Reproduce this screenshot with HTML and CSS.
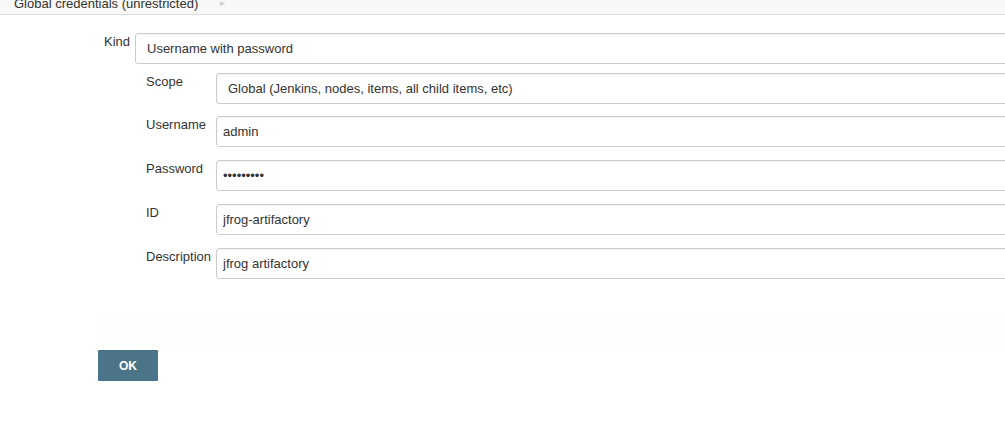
FILE: index.html
```html
<!DOCTYPE html>
<html>
<head>
<meta charset="utf-8">
<link rel="stylesheet" href="styles.css">
</head>
<body>
<div class="breadcrumbs">
  <span class="crumb">Global credentials (unrestricted)</span>
  <span class="arrow">&#9656;</span>
</div>
<form class="form">
  <div class="row kind-row">
    <label class="label kind-label">Kind</label>
    <div class="box select-box">Username with password</div>
  </div>
  <div class="nested">
    <div class="row">
      <label class="label">Scope</label>
      <div class="box select-box">Global (Jenkins, nodes, items, all child items, etc)</div>
    </div>
    <div class="row">
      <label class="label">Username</label>
      <input class="box input" type="text" value="admin">
    </div>
    <div class="row">
      <label class="label">Password</label>
      <input class="box input pw" type="password" value="123456789">
    </div>
    <div class="row">
      <label class="label">ID</label>
      <input class="box input" type="text" value="jfrog-artifactory">
    </div>
    <div class="row">
      <label class="label">Description</label>
      <input class="box input" type="text" value="jfrog artifactory">
    </div>
  </div>
  <div class="bottom-band"></div>
  <div class="actions">
    <button class="ok" type="button">OK</button>
  </div>
</form>
</body>
</html>
```
FILE: styles.css
```css
html, body {
  margin: 0;
  padding: 0;
  background: #ffffff;
  overflow: hidden;
  font-family: "Liberation Sans", Arial, sans-serif;
  color: #333333;
}

.breadcrumbs {
  height: 14px;
  background: #f8f8f6;
  border-bottom: 1px solid #dcdcdc;
  overflow: hidden;
  display: flex;
  align-items: flex-end;
  padding-left: 14px;
  font-size: 13px;
  line-height: 15px;
}

.crumb {
  color: #333333;
  position: relative;
  top: -3px;
  margin-top: -10px;
}

.arrow {
  color: #d0d0d0;
  font-size: 10px;
  margin-left: 22px;
  position: relative;
  top: -4px;
}

.form {
  padding-top: 18px;
  width: 1100px;
}

.row {
  display: flex;
  align-items: flex-start;
}

.kind-row {
  padding-left: 104px;
}

.label {
  font-size: 13px;
  line-height: 15px;
  padding-top: 1px;
  color: #333333;
  width: 70px;
  flex: none;
}

.kind-label {
  width: 31px;
}

.box {
  box-sizing: border-box;
  flex: 1;
  height: 31px;
  border: 1px solid #cccccc;
  border-radius: 3px;
  box-shadow: inset 0 1px 2px rgba(0, 0, 0, 0.06);
  background: #ffffff;
  font-family: "Liberation Sans", Arial, sans-serif;
  font-size: 13px;
  color: #333333;
  margin: 0;
}

.select-box {
  display: flex;
  align-items: center;
  padding-left: 11px;
  line-height: 15px;
}

.input {
  padding: 0 0 0 6px;
  outline: none;
}

.pw {
  font-size: 13px;
  letter-spacing: 0;
}

.nested {
  padding-left: 146px;
  padding-top: 9px;
  display: flex;
  flex-direction: column;
  gap: 13px;
}

.nested .row:nth-child(2) {
  margin-top: -1px;
}

.bottom-band {
  margin-top: 38px;
  margin-left: 97px;
  height: 28px;
  background: #fefefe;
}

.actions {
  padding-left: 98px;
  padding-top: 5px;
}

.ok {
  width: 60px;
  height: 31px;
  background: #4b7488;
  border: none;
  border-radius: 1px;
  color: #ffffff;
  font-family: "Liberation Sans", Arial, sans-serif;
  font-weight: bold;
  font-size: 12px;
  padding: 0;
}
```
